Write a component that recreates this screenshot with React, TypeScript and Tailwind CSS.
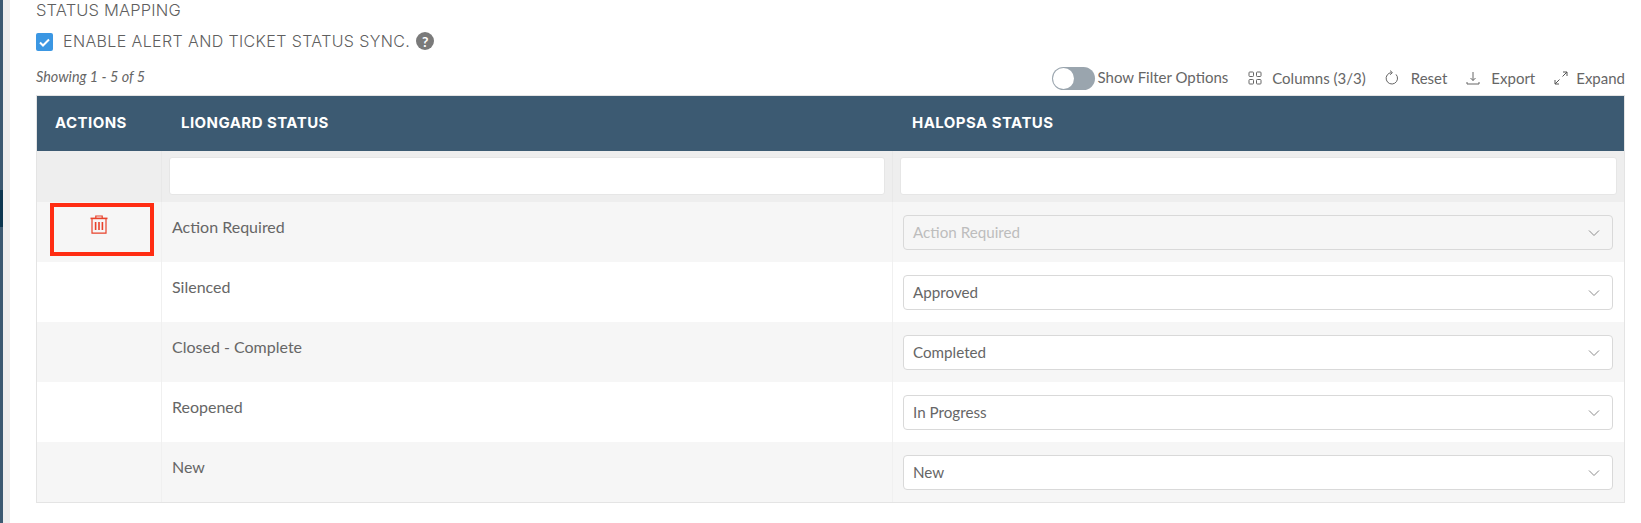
import React from "react";

const lato = { fontFamily: "Lato, 'Noto Sans', sans-serif" };

function Trash() {
  return (
    <svg width="18" height="19" viewBox="0 0 18 19" fill="none" stroke="#e8412a" strokeWidth="1.2">
      <path d="M5.8 3V1h6.4v2" />
      <path d="M0.5 3.4h17" strokeWidth="1.6" />
      <path d="M2 4v14.2h14V4" />
      <path d="M5.6 7v8M9 7v8M12.4 7v8" strokeWidth="1.6" />
    </svg>
  );
}

function Chevron() {
  return (
    <svg width="12" height="8" viewBox="0 0 12 8" fill="none" stroke="#8c8c8c" strokeWidth="1">
      <path d="M1 1.5l5 5 5-5" />
    </svg>
  );
}

function GridIcon() {
  return (
    <svg width="14" height="14" viewBox="0 0 14 14" fill="none" stroke="#666" strokeWidth="1">
      <rect x="1" y="1" width="4.5" height="4.5" rx="0.8" />
      <rect x="8.5" y="1" width="4.5" height="4.5" rx="0.8" />
      <rect x="1" y="8.5" width="4.5" height="4.5" rx="0.8" />
      <rect x="8.5" y="8.5" width="4.5" height="4.5" rx="0.8" />
    </svg>
  );
}

function ResetIcon() {
  return (
    <svg width="14" height="16" viewBox="0 0 14 16" fill="none" stroke="#666" strokeWidth="1">
      <path d="M11 4.4A5.7 5.7 0 1 1 6.5 2.6" />
      <path d="M5 0.6L7.4 2.6 5.2 4.8" />
    </svg>
  );
}

function ExportIcon() {
  return (
    <svg width="14" height="14" viewBox="0 0 14 14" fill="none" stroke="#666" strokeWidth="1">
      <path d="M7 1v8.5M4.5 7L7 9.5 9.5 7" />
      <path d="M1 11v2h12v-2" />
    </svg>
  );
}

function ExpandIcon() {
  return (
    <svg width="14" height="14" viewBox="0 0 14 14" fill="none" stroke="#555" strokeWidth="1">
      <path d="M8.5 5.5L13 1M9 1h4v4" />
      <path d="M5.5 8.5L1 13M1 9v4h4" />
    </svg>
  );
}

const rows: { name: string; value: string; disabled?: boolean }[] = [
  { name: "Action Required", value: "Action Required", disabled: true },
  { name: "Silenced", value: "Approved" },
  { name: "Closed - Complete", value: "Completed" },
  { name: "Reopened", value: "In Progress" },
  { name: "New", value: "New" },
];

function Tool({ icon, label, gap }: { icon: React.ReactNode; label: string; gap: string }) {
  return (
    <div className={`flex items-center ${gap} text-[15px] leading-[20px] text-[#666]`}>
      {icon}
      <span>{label}</span>
    </div>
  );
}

export default function App() {
  return (
    <div className="flex h-[523px] w-[1641px] overflow-hidden bg-white" style={lato}>
      <div className="flex w-[3px] shrink-0 flex-col bg-[#3c5a72]">
        <div className="h-[190px]" />
        <div className="h-[37px] bg-[#0b3650]" />
      </div>
      <div className="w-[7px] shrink-0 bg-[#eeeeee]" />
      <div className="flex min-w-0 flex-1 flex-col pl-[26px] pr-[16px]">
        <div className="h-[22px] text-[16.5px] leading-[20px] text-[#5f5f5f] font-['Inter'] font-light tracking-[0.15px]">
          STATUS MAPPING
        </div>
        <div className="mt-[11px] flex h-[18px] items-center">
          <div className="flex h-[18px] w-[17px] items-center justify-center rounded-[2px] bg-[#3b97e3]">
            <svg width="11" height="9" viewBox="0 0 11 9" fill="none" stroke="white" strokeWidth="2">
              <path d="M1 4.5L4 7.5 10 1.5" />
            </svg>
          </div>
          <span className="ml-[10px] -mt-[2px] text-[16px] text-[#5f5f5f] font-['Inter'] font-light tracking-[0.38px]">
            ENABLE ALERT AND TICKET STATUS SYNC.
          </span>
          <span className="ml-[6px] -mt-[2px] flex h-[18px] w-[18px] items-center justify-center rounded-full bg-[#7a7a7a] text-[14px] font-bold text-white">
            ?
          </span>
        </div>
        <div className="mt-[10px] flex h-[32px] items-start justify-between">
          <span className="mt-[7px] text-[14.4px] italic leading-[18px] text-[#666]">Showing 1 - 5 of 5</span>
          <div className="flex items-start">
            <div className="mt-[6px] flex items-center">
              <div className="flex h-[23px] w-[43px] items-center rounded-full bg-[#9aa5ae] pl-[1px]">
                <div className="h-[21px] w-[21px] rounded-full bg-white" />
              </div>
              <span className="ml-[3px] -mt-[3px] text-[15px] text-[#666]">Show Filter Options</span>
            </div>
            <div className="ml-[20px] mt-[7px] flex items-center gap-[19px]">
              <Tool icon={<GridIcon />} label="Columns (3/3)" gap="gap-[10px]" />
              <Tool icon={<ResetIcon />} label="Reset" gap="gap-[12px]" />
              <Tool icon={<ExportIcon />} label="Export" gap="gap-[11px]" />
              <Tool icon={<ExpandIcon />} label="Expand" gap="gap-[8px]" />
            </div>
          </div>
        </div>
        <div className="mt-[2px] w-[1589px] border border-[#e4e4e4]">
          <div className="flex h-[55px] items-center bg-[#3c5a72] text-[15px] font-bold text-white font-['Inter'] tracking-[0.45px]">
            <div className="w-[125px] pl-[18px]">ACTIONS</div>
            <div className="w-[731px] pl-[19px]">LIONGARD STATUS</div>
            <div className="flex-1 pl-[19px]">HALOPSA STATUS</div>
          </div>
          <div className="flex h-[51px] bg-[#eeeeee]">
            <div className="w-[125px] border-r border-[#e8e8e8]" />
            <div className="w-[731px] border-r border-[#e8e8e8] px-[7px] pt-[6px]">
              <div className="h-[38px] rounded-[3px] border border-[#e6e6e6] bg-white" />
            </div>
            <div className="flex-1 px-[7px] pt-[6px]">
              <div className="h-[38px] rounded-[3px] border border-[#e6e6e6] bg-white" />
            </div>
          </div>
          {rows.map((r, i) => (
            <div key={r.name} className={`flex h-[60px] ${i % 2 === 0 ? "bg-[#f6f6f6]" : "bg-white"}`}>
              <div className="relative w-[125px] border-r border-[#f0f0f0]">
                {i === 0 && (
                  <>
                    <div className="absolute left-[53px] top-[13px]">
                      <Trash />
                    </div>
                    <div className="absolute left-[13px] top-[1px] h-[53px] w-[104px] border-[4px] border-[#ff2d13]" />
                  </>
                )}
              </div>
              <div className="w-[731px] border-r border-[#f0f0f0] pl-[10px] pt-[15px] text-[16px] leading-[20px] text-[#666]">
                {r.name}
              </div>
              <div className="flex-1 pl-[10px] pr-[11px] pt-[13px]">
                <div className={`flex h-[35px] items-center justify-between rounded-[4px] border border-[#d9d9d9] pl-[9px] pr-[12px] ${r.disabled ? "bg-[#f6f6f6]" : "bg-white"}`}>
                  <span className={`text-[15.2px] ${r.disabled ? "text-[#bdbdbd]" : "text-[#666]"}`}>{r.value}</span>
                  <Chevron />
                </div>
              </div>
            </div>
          ))}
        </div>
      </div>
    </div>
  );
}
